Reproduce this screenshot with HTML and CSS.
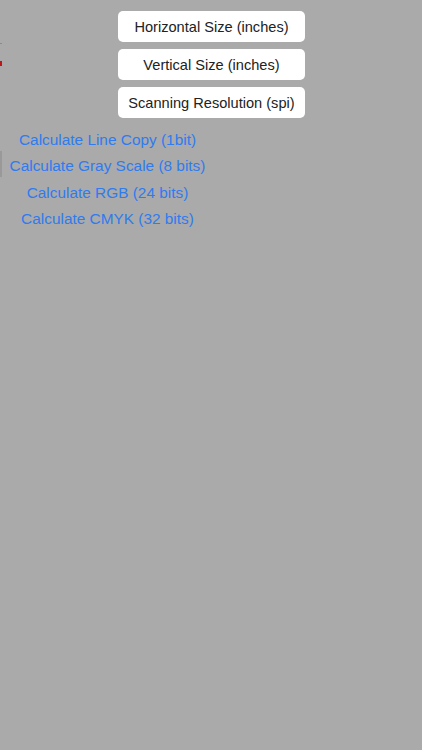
FILE: index.html
```html
<!DOCTYPE html>
<html>
<head>
<meta charset="utf-8">
<link rel="stylesheet" href="styles.css">
</head>
<body>
<div class="screen">
  <div class="edge-marks">
    <span class="mark mark-gray"></span>
    <span class="mark mark-red"></span>
    <span class="mark mark-dark"></span>
  </div>
  <div class="fields">
    <button class="field">Horizontal Size (inches)</button>
    <button class="field">Vertical Size (inches)</button>
    <button class="field">Scanning Resolution (spi)</button>
  </div>
  <div class="actions">
    <a class="action">Calculate Line Copy (1bit)</a>
    <a class="action">Calculate Gray Scale (8 bits)</a>
    <a class="action">Calculate RGB (24 bits)</a>
    <a class="action">Calculate CMYK (32 bits)</a>
  </div>
</div>
</body>
</html>
```

FILE: styles.css
```css
html, body {
  margin: 0;
  padding: 0;
}
body {
  background: #aaaaaa;
  font-family: "Liberation Sans", Arial, sans-serif;
}
.screen {
  position: relative;
  width: 422px;
  height: 750px;
  background: #aaaaaa;
  overflow: hidden;
}
.edge-marks {
  position: absolute;
  left: 0;
  top: 0;
  width: 3px;
  height: 200px;
}
.mark {
  position: absolute;
  left: 0;
  display: block;
}
.mark-gray {
  top: 43px;
  width: 2px;
  height: 1px;
  background: #8a8a8a;
}
.mark-red {
  top: 61px;
  width: 2px;
  height: 5px;
  background: #c0141c;
}
.mark-dark {
  top: 151px;
  width: 2px;
  height: 26px;
  background: #999999;
}
.fields {
  display: flex;
  flex-direction: column;
  align-items: flex-start;
  gap: 7px;
  padding: 11px 0 0 118px;
}
.field {
  width: 187px;
  height: 31px;
  border: none;
  border-radius: 5px;
  background: #ffffff;
  color: #222222;
  font-family: "Liberation Sans", Arial, sans-serif;
  font-size: 14.6px;
  padding: 0;
  margin: 0;
  display: flex;
  align-items: center;
  justify-content: center;
}
.actions {
  display: flex;
  flex-direction: column;
  align-items: center;
  width: 215px;
  padding-top: 9px;
}
.action {
  display: block;
  height: 26.3px;
  line-height: 26px;
  color: #2f7bf0;
  font-size: 15.4px;
  white-space: nowrap;
}
```
